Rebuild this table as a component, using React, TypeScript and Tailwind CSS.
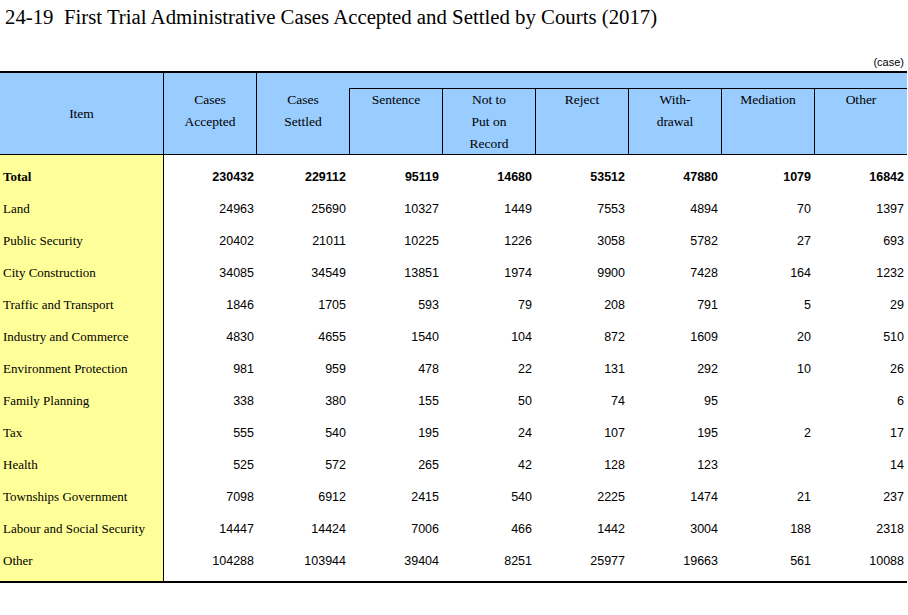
const SERIF = "font-['Liberation_Serif','Times_New_Roman',serif]";
const SANS = "font-['Liberation_Sans',Arial,sans-serif]";

type Row = { label: string; values: (number | null)[]; bold?: boolean };

const ROWS: Row[] = [
  { label: 'Total', values: [230432, 229112, 95119, 14680, 53512, 47880, 1079, 16842], bold: true },
  { label: 'Land', values: [24963, 25690, 10327, 1449, 7553, 4894, 70, 1397] },
  { label: 'Public Security', values: [20402, 21011, 10225, 1226, 3058, 5782, 27, 693] },
  { label: 'City Construction', values: [34085, 34549, 13851, 1974, 9900, 7428, 164, 1232] },
  { label: 'Traffic and Transport', values: [1846, 1705, 593, 79, 208, 791, 5, 29] },
  { label: 'Industry and Commerce', values: [4830, 4655, 1540, 104, 872, 1609, 20, 510] },
  { label: 'Environment Protection', values: [981, 959, 478, 22, 131, 292, 10, 26] },
  { label: 'Family Planning', values: [338, 380, 155, 50, 74, 95, null, 6] },
  { label: 'Tax', values: [555, 540, 195, 24, 107, 195, 2, 17] },
  { label: 'Health', values: [525, 572, 265, 42, 128, 123, null, 14] },
  { label: 'Townships Government', values: [7098, 6912, 2415, 540, 2225, 1474, 21, 237] },
  { label: 'Labour and Social Security', values: [14447, 14424, 7006, 466, 1442, 3004, 188, 2318] },
  { label: 'Other', values: [104288, 103944, 39404, 8251, 25977, 19663, 561, 10088] },
];

// widths of the eight number columns (the first one sits right after the item column)
const COL_W = ['w-[93px]', 'w-[92px]', 'w-[93px]', 'w-[93px]', 'w-[93px]', 'w-[93px]', 'w-[93px]', 'w-[93px]'];

const SUB_HEADS: string[][] = [
  ['Sentence'],
  ['Not to', 'Put on', 'Record'],
  ['Reject'],
  ['With-', 'drawal'],
  ['Mediation'],
  ['Other'],
];

export default function App() {
  return (
    <div className={`w-[908px] h-[615px] bg-white text-black ${SERIF}`}>
      <div className="pl-[5px] pt-[5px] text-[20.8px] leading-[24px] whitespace-pre">
        24-19  First Trial Administrative Cases Accepted and Settled by Courts (2017)
      </div>

      <div className={`w-[907px] mt-[26px] pr-[3px] text-right text-[11px] leading-[14px] ${SANS}`}>(case)</div>

      <div className="w-[907px] mt-[2px] border-t-2 border-b-2 border-black">
        {/* header */}
        <div className="flex h-[82px] bg-[#99ccff] border-b border-black text-[13.5px] leading-[22px]">
          <div className="w-[164px] shrink-0 border-r border-black pt-[30px] text-center">Item</div>
          <div className="w-[93px] shrink-0 border-r border-black pt-[16px] text-center">
            <div>Cases</div>
            <div>Accepted</div>
          </div>
          <div className="w-[92px] shrink-0 pt-[16px] text-center">
            <div>Cases</div>
            <div>Settled</div>
          </div>
          <div className="flex flex-col flex-1">
            <div className="h-[15px] shrink-0" />
            <div className="flex flex-1 border-t border-black">
              {SUB_HEADS.map((lines, i) => (
                <div key={i} className="w-[93px] shrink-0 border-l border-black text-center">
                  {lines.map(l => (
                    <div key={l}>{l}</div>
                  ))}
                </div>
              ))}
            </div>
          </div>
        </div>

        {/* body */}
        {ROWS.map(row => (
          <div key={row.label} className="flex h-[32px]">
            <div
              className={`w-[164px] shrink-0 bg-[#ffff99] border-r border-black pl-[3px] pt-[14px] text-[13px] leading-[16px] ${row.bold ? 'font-bold' : ''}`}
            >
              {row.label}
            </div>
            {row.values.map((v, i) => (
              <div
                key={i}
                className={`${COL_W[i]} shrink-0 pr-[3px] pt-[14px] text-right text-[12.5px] leading-[16px] ${SANS} ${row.bold ? 'font-bold' : ''}`}
              >
                {v ?? ''}
              </div>
            ))}
          </div>
        ))}
        <div className="flex h-[10px]">
          <div className="w-[164px] shrink-0 bg-[#ffff99] border-r border-black" />
        </div>
      </div>
    </div>
  );
}
